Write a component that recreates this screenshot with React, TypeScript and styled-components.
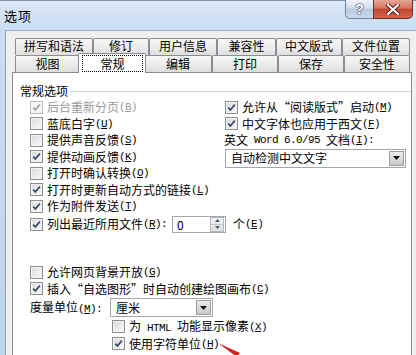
import React from "react";
import styled, { createGlobalStyle, css } from "styled-components";

const GlobalStyle = createGlobalStyle`
  html, body {
    margin: 0;
    padding: 0;
    background: #fff;
  }
  body {
    font-family: "Noto Sans CJK SC", "Noto Sans", sans-serif;
  }
`;

// Window chrome
const Window = styled.div`
  position: relative;
  width: 416px;
  height: 355px;
  overflow: hidden;
  display: flex;
  flex-direction: column;
  background: linear-gradient(180deg, #dce9f7 0px, #c9dcf1 30px, #bfd5ee 100%);
  font-family: "Noto Sans CJK SC", sans-serif;
  font-size: 12px;
  color: #000;
`;

const TitleBar = styled.div`
  height: 30px;
  flex-shrink: 0;
  display: flex;
  align-items: flex-start;
  padding-left: 4px;
  box-sizing: border-box;
  border-top: 1px solid #7f95b3;
`;

const Title = styled.div`
  font-size: 13px;
  line-height: 29px;
  letter-spacing: 1px;
`;

const CaptionButtons = styled.div`
  display: flex;
  margin-left: auto;
  margin-right: 3px;
  margin-top: -1px;
`;

const HelpButton = styled.div`
  width: 28px;
  height: 19px;
  box-sizing: border-box;
  border: 1px solid #6f819c;
  border-top: none;
  border-right: none;
  border-bottom-left-radius: 5px;
  background: linear-gradient(180deg, #eef3f9 0%, #d2deec 45%, #b9cadf 50%, #c9d8ea 100%);
  display: flex;
  align-items: center;
  justify-content: center;
  font-family: "Liberation Sans", sans-serif;
  font-weight: bold;
  font-size: 14px;
  color: #fff;
  text-shadow: 0 0 1px #34435a, 0 0 1px #34435a, 0 0 2px #34435a;
`;

const CloseButton = styled.div`
  width: 40px;
  height: 19px;
  box-sizing: border-box;
  border: 1px solid #6a2f2a;
  border-top: none;
  border-bottom-right-radius: 5px;
  background: linear-gradient(180deg, #e9a596 0%, #d77461 45%, #c34532 52%, #d3644c 100%);
  display: flex;
  align-items: center;
  justify-content: center;
`;

const Body = styled.div`
  flex: 1;
  margin-left: 5px;
  background: #f0f0f0;
  border-left: 1px solid #8d9eb5;
  border-top: 1px solid #9fb1c8;
  padding: 7px 0 0 6px;
`;

// Tabs
const TabStrip = styled.div`
  padding-left: 3px;
`;

const TabRow = styled.div`
  display: flex;
  width: 395px;
  height: 17px;
`;

const Tab = styled.div<{ $w: number; $active?: boolean; $front?: boolean }>`
  flex: 0 0 ${(p) => p.$w}px;
  box-sizing: border-box;
  border: 1px solid #8a8d94;
  border-bottom: none;
  border-radius: 2px 2px 0 0;
  background: linear-gradient(180deg, #f7f7f7 0%, #ececec 50%, #dedede 100%);
  font-size: 12px;
  line-height: 14px;
  padding-top: ${(p) => (p.$front ? 1 : 0)}px;
  text-align: center;
  white-space: nowrap;

  ${(p) =>
    p.$active &&
    css`
      flex-basis: ${p.$w + 4}px;
      margin: -2px -2px -1px;
      position: relative;
      z-index: 1;
      background: #fff;
      padding: 1px 2px 1px 3px;
    `}
`;

const FocusRing = styled.div`
  height: 100%;
  box-sizing: border-box;
  border: 1px dotted #000;
  padding-top: 1px;
`;

const Panel = styled.div`
  width: 400px;
  height: 300px;
  box-sizing: border-box;
  border: 1px solid #8a8d94;
  background: #fff;
  padding: 10px 0 0 7px;
`;

const SectionHeader = styled.div`
  display: flex;
  align-items: center;
  height: 15px;
  line-height: 15px;
`;

const Rule = styled.div`
  flex: 1;
  height: 1px;
  margin-left: 2px;
  margin-top: 1px;
  background: #d3d6da;
`;

const Rows = styled.div`
  padding-left: 10px;
  margin-top: 1px;
`;

const Columns = styled.div`
  display: grid;
  grid-template-columns: 194px 181px;
`;

const Column = styled.div<{ $right?: boolean }>`
  display: flex;
  flex-direction: column;
  ${(p) => p.$right && "padding-left: 1px;"}
`;

// Check boxes
const Row = styled.div<{ $h?: number; $indent?: number; $disabled?: boolean }>`
  display: flex;
  align-items: center;
  height: ${(p) => p.$h ?? 16.5}px;
  padding-left: ${(p) => p.$indent ?? 0}px;
  white-space: nowrap;
  line-height: 16px;
  color: ${(p) => (p.$disabled ? "#9a9a9a" : "#000")};
`;

const Box = styled.span<{ $disabled?: boolean }>`
  width: 13px;
  height: 13px;
  flex-shrink: 0;
  margin-right: 4px;
  box-sizing: border-box;
  border: 1px solid ${(p) => (p.$disabled ? "#bdbdbd" : "#8e8f8f")};
  background: ${(p) =>
    p.$disabled
      ? "#f4f4f4"
      : "linear-gradient(135deg, #d9d9d9 0%, #ececec 55%, #fafafa 100%)"};
  box-shadow: inset 0 0 0 1px ${(p) => (p.$disabled ? "#f7f7f7" : "#f3f3f3")};
  display: flex;
  align-items: center;
  justify-content: center;
`;

const Mono = styled.span`
  font-family: "Liberation Mono", monospace;
  font-size: 11px;
  letter-spacing: -0.6px;
  white-space: pre;
`;

const Under = styled.span`
  text-decoration: underline;
`;

const Key = ({ k, colon }: { k: string; colon?: boolean }) => (
  <Mono>
    (<Under>{k}</Under>){colon ? ":" : ""}
  </Mono>
);

const CheckMark = ({ disabled }: { disabled?: boolean }) => (
  <svg width="9" height="9" viewBox="0 0 9 9">
    <path
      d="M1.2 4.6 L3.4 6.9 L7.9 1.6"
      fill="none"
      stroke={disabled ? "#a6a6a6" : "#3f4c6b"}
      strokeWidth="1.7"
    />
  </svg>
);

type CheckProps = {
  label: React.ReactNode;
  k: string;
  checked?: boolean;
  disabled?: boolean;
  indent?: number;
  h?: number;
};

const Check = ({ label, k, checked, disabled, indent, h }: CheckProps) => (
  <Row $indent={indent} $h={h} $disabled={disabled}>
    <Box $disabled={disabled}>{checked && <CheckMark disabled={disabled} />}</Box>
    <span>{label}</span>
    <Key k={k} />
  </Row>
);

const FieldLabel = styled.div`
  height: 16.5px;
  line-height: 16px;
  margin-left: -1px;
  white-space: nowrap;
  display: flex;
  align-items: center;
`;

// Combo box
const Combo = styled.div<{ $w: number }>`
  width: ${(p) => p.$w}px;
  height: 19px;
  box-sizing: border-box;
  border: 1px solid #a2a7ae;
  background: #fff;
  display: flex;
  align-items: center;
`;

const ComboText = styled.span`
  flex: 1;
  padding-left: 5px;
  line-height: 16px;
`;

const DropButton = styled.div`
  width: 15px;
  height: 15px;
  margin-right: 1px;
  box-sizing: border-box;
  border: 1px solid #9c9c9c;
  background: linear-gradient(180deg, #ededed 0%, #dadada 50%, #c9c9c9 100%);
  display: flex;
  align-items: center;
  justify-content: center;
`;

const Arrow = () => (
  <DropButton>
    <svg width="7" height="4" viewBox="0 0 7 4">
      <path d="M0 0 H7 L3.5 4 Z" fill="#111" />
    </svg>
  </DropButton>
);

// Spin box
const SpinBox = styled.div`
  width: 54px;
  height: 17px;
  margin-left: 5px;
  box-sizing: border-box;
  border: 1px solid #a2a7ae;
  background: #fff;
  display: flex;
`;

const SpinValue = styled.span`
  flex: 1;
  padding-left: 4px;
  line-height: 15px;
`;

const SpinButtons = styled.div`
  width: 14px;
  margin: 0 1px 0 0;
  display: flex;
  flex-direction: column;
  border: 1px solid #b3b8bf;
  box-sizing: border-box;
  background: linear-gradient(180deg, #f3f3f3, #dedede);
`;

const SpinHalf = styled.div<{ $down?: boolean }>`
  flex: 1;
  display: flex;
  align-items: center;
  justify-content: center;
  ${(p) => p.$down && "border-top: 1px solid #c3c7cc;"}
`;

const Suffix = styled.span`
  margin-left: 7px;
`;

const LowerGroup = styled.div`
  margin-top: 31px;
`;

const MeasureLabel = styled.span`
  width: 80px;
`;

const Annotation = styled.svg`
  position: absolute;
  left: 0;
  top: 0;
  pointer-events: none;
`;

const backTabs = [
  { t: "拼写和语法", w: 78 },
  { t: "修订", w: 56 },
  { t: "用户信息", w: 68 },
  { t: "兼容性", w: 59 },
  { t: "中文版式", w: 66 },
  { t: "文件位置", w: 68 },
];

const frontTabs = [
  { t: "视图", w: 65 },
  { t: "常规", w: 64, active: true },
  { t: "编辑", w: 68 },
  { t: "打印", w: 66 },
  { t: "保存", w: 66 },
  { t: "安全性", w: 66 },
];

export default function App() {
  return (
    <>
      <GlobalStyle />
      <Window lang="zh-CN">
        <TitleBar>
          <Title>选项</Title>
          <CaptionButtons>
            <HelpButton>?</HelpButton>
            <CloseButton>
              <svg width="14" height="11" viewBox="0 0 14 11">
                <path
                  d="M2 1 L12 10 M12 1 L2 10"
                  stroke="#4a1a16"
                  strokeWidth="4"
                  strokeLinecap="square"
                />
                <path
                  d="M2 1 L12 10 M12 1 L2 10"
                  stroke="#fff"
                  strokeWidth="2.2"
                  strokeLinecap="square"
                />
              </svg>
            </CloseButton>
          </CaptionButtons>
        </TitleBar>

        <Body>
          <TabStrip>
            <TabRow>
              {backTabs.map((tab) => (
                <Tab key={tab.t} $w={tab.w}>
                  {tab.t}
                </Tab>
              ))}
            </TabRow>
            <TabRow>
              {frontTabs.map((tab) => (
                <Tab key={tab.t} $w={tab.w} $active={tab.active} $front>
                  {tab.active ? <FocusRing>{tab.t}</FocusRing> : tab.t}
                </Tab>
              ))}
            </TabRow>
          </TabStrip>

          <Panel>
            <SectionHeader>
              <span>常规选项</span>
              <Rule />
            </SectionHeader>

            <Rows>
              <Columns>
                <Column>
                  <Check label="后台重新分页" k="B" checked disabled />
                  <Check label="蓝底白字" k="U" />
                  <Check label="提供声音反馈" k="S" />
                  <Check label="提供动画反馈" k="K" checked />
                  <Check label="打开时确认转换" k="O" />
                  <Check label="打开时更新自动方式的链接" k="L" checked />
                  <Check label="作为附件发送" k="T" checked />
                </Column>
                <Column $right>
                  <Check label="允许从“阅读版式”启动" k="M" checked />
                  <Check label="中文字体也应用于西文" k="F" checked />
                  <FieldLabel>
                    英文<Mono> Word 6.0/95 </Mono>文档
                    <Key k="I" colon />
                  </FieldLabel>
                  <Combo $w={181}>
                    <ComboText>自动检测中文文字</ComboText>
                    <Arrow />
                  </Combo>
                </Column>
              </Columns>

              <Row $h={18} style={{ marginTop: 0.5 }}>
                <Box>
                  <CheckMark />
                </Box>
                <span>列出最近所用文件</span>
                <Key k="R" colon />
                <SpinBox>
                  <SpinValue>0</SpinValue>
                  <SpinButtons>
                    <SpinHalf>
                      <svg width="5" height="3" viewBox="0 0 5 3">
                        <path d="M0 3 H5 L2.5 0 Z" fill="#4b5a70" />
                      </svg>
                    </SpinHalf>
                    <SpinHalf $down>
                      <svg width="5" height="3" viewBox="0 0 5 3">
                        <path d="M0 0 H5 L2.5 3 Z" fill="#4b5a70" />
                      </svg>
                    </SpinHalf>
                  </SpinButtons>
                </SpinBox>
                <Suffix>个</Suffix>
                <Key k="E" />
              </Row>

              <LowerGroup>
                <Check label="允许网页背景开放" k="G" />
                <Check label="插入“自选图形”时自动创建绘图画布" k="C" checked />
                <Row $h={21}>
                  <MeasureLabel>
                    度量单位
                    <Key k="M" colon />
                  </MeasureLabel>
                  <Combo $w={103}>
                    <ComboText>厘米</ComboText>
                    <Arrow />
                  </Combo>
                </Row>
                <Check
                  label={
                    <>
                      为<Mono> HTML </Mono>功能显示像素
                    </>
                  }
                  k="X"
                  indent={82}
                  h={17}
                />
                <Check label="使用字符单位" k="H" checked indent={82} h={17} />
              </LowerGroup>
            </Rows>
          </Panel>
        </Body>

        <Annotation width="416" height="355" viewBox="0 0 416 355">
          <path d="M218 343 L240 353 L237 357 Z" fill="#d0231c" />
        </Annotation>
      </Window>
    </>
  );
}
